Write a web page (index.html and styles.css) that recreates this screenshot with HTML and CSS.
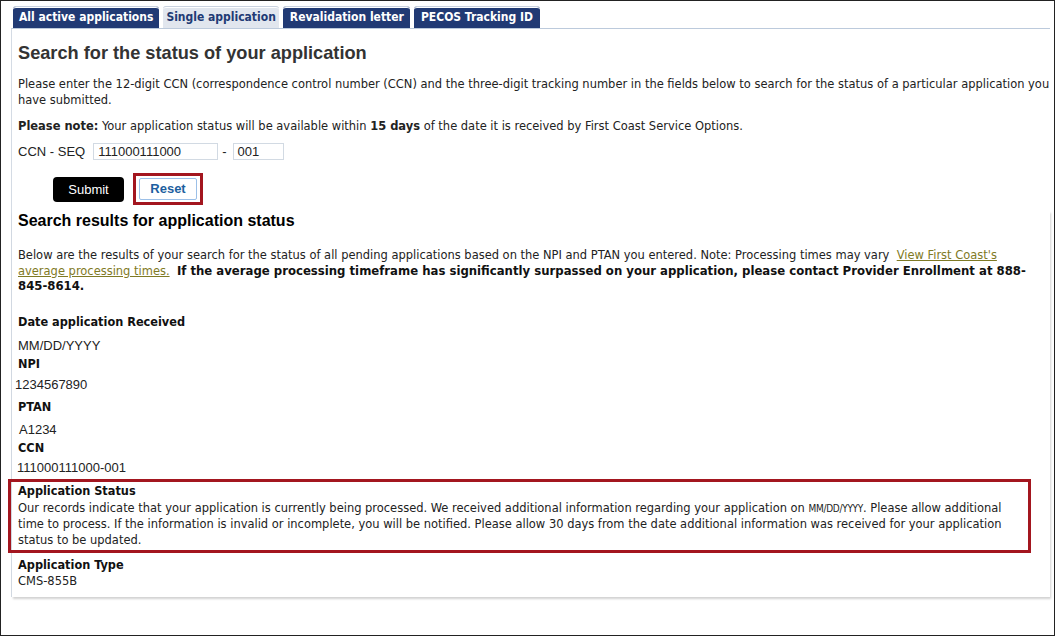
FILE: index.html
```html
<!DOCTYPE html>
<html>
<head>
<meta charset="utf-8">
<link rel="stylesheet" href="styles.css">
</head>
<body>
<div class="frame">
  <div class="tabs">
    <div class="tab">All active applications</div>
    <div class="tab active">Single application</div>
    <div class="tab">Revalidation letter</div>
    <div class="tab">PECOS Tracking ID</div>
  </div>
  <div class="content">
    <h1 class="title">Search for the status of your application</h1>
    <p class="intro">Please enter the 12-digit CCN (correspondence control number (CCN) and the three-digit tracking number in the fields below to search for the status of a particular application you have submitted.</p>
    <p class="note"><b>Please note:</b> Your application status will be available within <b>15 days</b> of the date it is received by First Coast Service Options.</p>
    <div class="ccn-row">
      <span class="ccn-label">CCN - SEQ</span>
      <span class="input wide">111000111000</span>
      <span class="dash">-</span>
      <span class="input short">001</span>
    </div>
    <div class="buttons">
      <span class="btn submit">Submit</span>
      <span class="highlight-btn"><span class="btn reset">Reset</span></span>
    </div>
    <div class="results">
      <h2 class="subtitle">Search results for application status</h2>
      <p class="desc">Below are the results of your search for the status of all pending applications based on the NPI and PTAN you entered. Note: Processing times may vary &nbsp;<a class="link">View First Coast's average processing times.</a> &nbsp;<b>If the average processing timeframe has significantly surpassed on your application, please contact Provider Enrollment at 888-845-8614.</b></p>
      <div class="label first">Date application Received</div>
      <div class="value v-date">MM/DD/YYYY</div>
      <div class="label">NPI</div>
      <div class="value v-npi">1234567890</div>
      <div class="label l-ptan">PTAN</div>
      <div class="value v-ptan">A1234</div>
      <div class="label">CCN</div>
      <div class="value v-ccn">111000111000-001</div>
      <div class="status-box">
        <div class="label">Application Status</div>
        <div class="status-text">Our records indicate that your application is currently being processed. We received additional information regarding your application on <span class="small-date">MM/DD/YYYY</span>. Please allow additional time to process. If the information is invalid or incomplete, you will be notified. Please allow 30 days from the date additional information was received for your application status to be updated.</div>
      </div>
      <div class="label l-type">Application Type</div>
      <div class="status-text type-val">CMS-855B</div>
    </div>
  </div>
</div>
</body>
</html>
```

FILE: styles.css
```css
* { box-sizing: border-box; }
html, body { margin: 0; padding: 0; background: #fff; }
.frame {
  width: 1055px;
  height: 636px;
  border: 1px solid #222;
  overflow: hidden;
  font-family: "DejaVu Sans Condensed", "DejaVu Sans", sans-serif;
  font-size: 12.75px;
  color: #222;
}
.tabs {
  display: flex;
  gap: 4px;
  padding: 5px 0 0 12px;
}
.tab {
  height: 22px;
  padding: 3px 6px 0 6px;
  background: #213a74;
  color: #fff;
  font-weight: bold;
  font-size: 12px;
  border-top: 1px solid #c9d2df;
  border-top-left-radius: 3px;
  border-top-right-radius: 3px;
  box-shadow: inset 0 1px 0 #fff;
  white-space: nowrap;
}
.tab.active {
  background: #e1e6ee;
  color: #213a74;
  padding: 3px 3px 0 3px;
}
.tab:nth-child(3) { padding: 3px 6px 0 7px; }
.tab:last-child { padding: 3px 7px 0 7px; }
.content {
  margin-left: 10px;
  margin-right: 4px;
  border-top: 1px solid #bccadc;
  border-left: 1px solid #d4dbe4;
  padding-left: 6px;
}
.title {
  margin: 13px 0 0 0;
  font-family: "Liberation Sans", Arial, sans-serif;
  font-size: 18.2px;
  font-weight: bold;
  color: #333;
  line-height: 22px;
}
.intro {
  margin: 12px 0 0 0;
  line-height: 16px;
}
.note {
  margin: 10px 0 0 0;
  line-height: 16px;
}
.ccn-row {
  display: flex;
  align-items: center;
  margin-top: 9px;
  height: 17px;
  font-family: "Liberation Sans", Arial, sans-serif;
  font-size: 13px;
}
.ccn-label { margin-right: 8px; color: #222; }
.input {
  display: inline-block;
  height: 17px;
  line-height: 15px;
  border: 1px solid #d2dae3;
  padding: 0 4px;
  color: #222;
}
.input.wide { width: 125px; }
.input.short { width: 51px; }
.dash { margin: 0 6px 0 4px; }
.buttons {
  display: flex;
  align-items: center;
  margin: 12px 0 0 35px;
  height: 34px;
}
.btn {
  display: inline-block;
  font-family: "Liberation Sans", Arial, sans-serif;
  font-size: 13px;
  text-align: center;
}
.submit {
  width: 71px;
  height: 25px;
  line-height: 25px;
  background: #000;
  color: #fff;
  border-radius: 4px;
}
.highlight-btn {
  margin-left: 9px;
  border: 3px solid #a3161f;
  padding: 2px 3px;
}
.reset {
  width: 58px;
  height: 22px;
  line-height: 20px;
  background: #fff;
  color: #1d5fa0;
  font-weight: bold;
  border: 1px solid #9cc0e8;
  border-radius: 2px;
}
.results {
  margin-left: -6px;
  padding-left: 6px;
  box-shadow: 1px 2px 2px rgba(0,0,0,0.18);
  padding-bottom: 8px;
}
.subtitle {
  margin: 5px 0 0 0;
  font-family: "Liberation Sans", Arial, sans-serif;
  font-size: 16px;
  font-weight: bold;
  color: #000;
  line-height: 20px;
}
.desc {
  margin: 16px 0 0 0;
  padding-right: 9px;
  line-height: 15.5px;
}
.desc b { font-size: 13px; color: #111; }
.link {
  color: #7f7a25;
  text-decoration: underline;
}
.label {
  font-weight: bold;
  font-size: 12.6px;
  color: #111;
  line-height: 18px;
}
.label.first { margin-top: 19px; }
.value {
  font-family: "Liberation Sans", Arial, sans-serif;
  font-size: 13px;
  color: #222;
  line-height: 18px;
}
.v-date { margin-top: 6px; }
.v-npi { margin: 3px 0 0 -3px; }
.l-ptan { margin-top: 4px; }
.v-ptan { margin: 5px 0 0 1px; }
.v-ccn { margin: 2px 0 0 -1px; }
.status-box {
  margin: 2px 19px 0 -10px;
  border: 3px solid #a3161f;
  padding: 0 0 3px 7px;
}
.status-text {
  line-height: 16px;
}
.status-box .status-text { line-height: 15.5px; }
.small-date {
  font-size: 10px;
  letter-spacing: -0.3px;
}
.l-type { margin-top: 3px; }
.type-val { margin-top: -1px; }
```
